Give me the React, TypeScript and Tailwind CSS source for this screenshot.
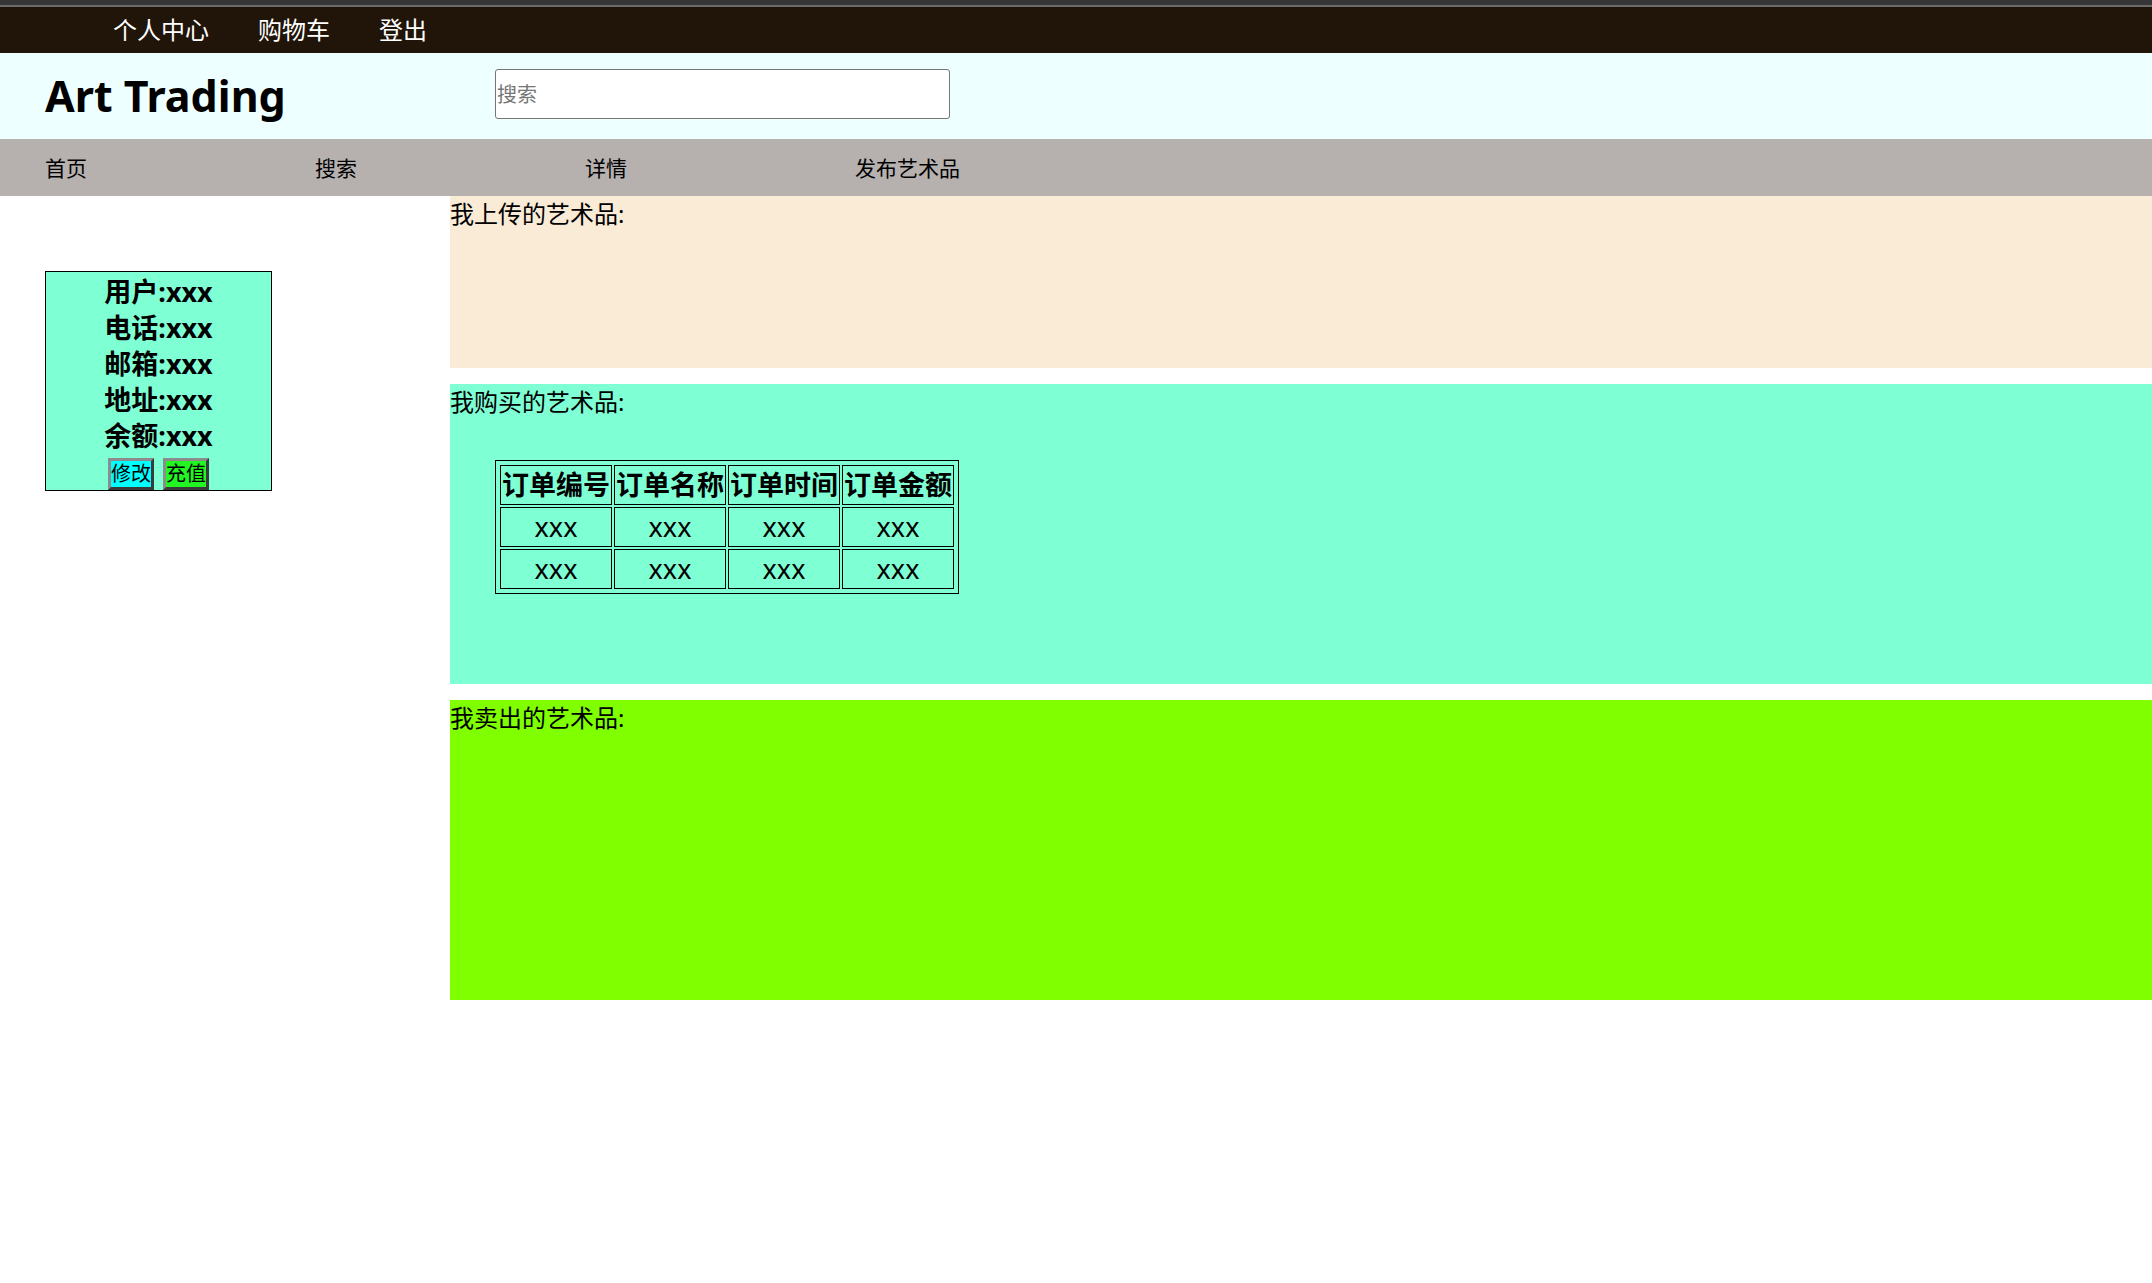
import React from 'react';

const topLinks = ['个人中心', '购物车', '登出'];
const navLinks = ['首页', '搜索', '详情', '发布艺术品'];
const userInfo = ['用户:xxx', '电话:xxx', '邮箱:xxx', '地址:xxx', '余额:xxx'];
const orderCols = ['订单编号', '订单名称', '订单时间', '订单金额'];
const orderRows = [
  ['xxx', 'xxx', 'xxx', 'xxx'],
  ['xxx', 'xxx', 'xxx', 'xxx'],
];

function UserCard() {
  return (
    <div className="w-[227px] border border-black bg-[#7fffd4] pt-[2px] flex flex-col items-center">
      {userInfo.map((line) => (
        <div key={line} className="text-[27px] leading-[36px] font-bold text-black">
          {line}
        </div>
      ))}
      <div className="mt-[4px] flex gap-[9px]">
        <button className="h-[32px] border-[3px] border-t-[#8c8c8c] border-l-[#8c8c8c] border-b-[#3a3a3a] border-r-[#3a3a3a] bg-[#00ffff] text-[20px] leading-[26px] text-black">
          修改
        </button>
        <button className="h-[32px] border-[3px] border-t-[#8c8c8c] border-l-[#8c8c8c] border-b-[#3a3a3a] border-r-[#3a3a3a] bg-[#22f522] text-[20px] leading-[26px] text-black">
          充值
        </button>
      </div>
    </div>
  );
}

function OrderTable() {
  return (
    <table className="ml-[45px] mt-[41px] border border-black border-separate border-spacing-[2px] p-[2px]">
      <thead>
        <tr>
          {orderCols.map((c) => (
            <th key={c} className="w-[112px] h-[40px] p-0 border border-black text-[27px] font-bold leading-[36px] text-center">
              {c}
            </th>
          ))}
        </tr>
      </thead>
      <tbody>
        {orderRows.map((row, i) => (
          <tr key={i}>
            {row.map((cell, j) => (
              <td key={j} className="w-[112px] h-[40px] p-0 border border-black text-[27px] leading-[36px] text-center">
                {cell}
              </td>
            ))}
          </tr>
        ))}
      </tbody>
    </table>
  );
}

export default function App() {
  return (
    <div className="min-h-screen bg-white text-black font-['Noto_Sans','Noto_Sans_CJK_SC',sans-serif]">
      <div className="h-[5px] bg-[#363636]" />
      <div className="h-[2px] bg-[#6b6b6b]" />
      <div className="h-[46px] bg-[#201508] flex items-center gap-[49px] pl-[113px]">
        {topLinks.map((t) => (
          <a key={t} className="text-[24px] leading-[30px] text-white">
            {t}
          </a>
        ))}
      </div>

      <header className="h-[86px] bg-[#eeffff] flex items-center">
        <h1 className="ml-[45px] w-[450px] text-[43px] leading-[56px] font-bold">Art Trading</h1>
        <input
          placeholder="搜索"
          className="mb-[4px] w-[455px] h-[50px] border border-[#767676] rounded-[3px] bg-white px-[1px] text-[20px] placeholder:text-[#757575] outline-none"
        />
      </header>

      <nav className="h-[57px] bg-[#b6b0af] flex items-center pl-[45px]">
        {navLinks.map((n) => (
          <a key={n} className="w-[270px] text-[21px] leading-[28px]">
            {n}
          </a>
        ))}
      </nav>

      <div className="flex">
        <aside className="w-[450px] shrink-0 pl-[45px] pt-[75px]">
          <UserCard />
        </aside>
        <main className="flex-1 flex flex-col gap-[16px]">
          <section className="h-[172px] bg-[#faebd7]">
            <p className="text-[24px] leading-[35px]">我上传的艺术品:</p>
          </section>
          <section className="h-[300px] bg-[#7fffd4]">
            <p className="text-[24px] leading-[35px]">我购买的艺术品:</p>
            <OrderTable />
          </section>
          <section className="h-[300px] bg-[#7fff00]">
            <p className="text-[24px] leading-[35px]">我卖出的艺术品:</p>
          </section>
        </main>
      </div>
    </div>
  );
}
